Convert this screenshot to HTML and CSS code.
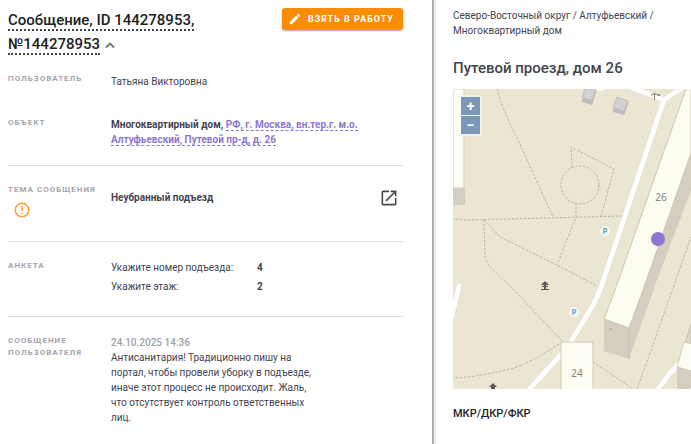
FILE: index.html
```html
<!DOCTYPE html>
<html lang="ru">
<head>
    <meta charset="UTF-8">
    <meta name="viewport" content="width=device-width, initial-scale=1.0">
    <title>Сообщение</title>
    <link rel="stylesheet" href="styles.css">
</head>
<body>
    <div class="page">
        <main class="message">
            <header class="head">
                <h1 class="title"><span class="title-text">Сообщение, ID 144278953, №144278953</span>
                    <button class="icon-btn toggle" type="button" aria-label="Свернуть">
                        <svg width="12" height="8" viewBox="0 0 12 8"><path d="M2 6.500l4-4 4 4" fill="none" stroke="#757575" stroke-width="1.800"/></svg>
                    </button>
                </h1>
                <button class="take" type="button">
                    <svg width="14" height="14" viewBox="0 0 24 24"><path fill="#fff" d="M3 17.250V21h3.750L17.810 9.940l-3.750-3.750L3 17.250zM20.710 7.040a1 1 0 0 0 0-1.410l-2.340-2.340a1 1 0 0 0-1.410 0l-1.830 1.830 3.750 3.750 1.830-1.830z"/></svg>
                    Взять в работу
                </button>
            </header>

            <section class="row row-user">
                <h2 class="label">Пользователь</h2>
                <div class="value">Татьяна Викторовна</div>
            </section>

            <section class="row row-object">
                <h2 class="label">Объект</h2>
                <div class="value strong">Многоквартирный дом, <a class="link" href="#">РФ, г. Москва, вн.тер.г. м.о. Алтуфьевский, Путевой пр-д, д. 26</a></div>
            </section>

            <section class="row row-theme line">
                <div class="label-box">
                    <h2 class="label">Тема сообщения</h2>
                    <svg class="warn" width="16" height="16" viewBox="0 0 16 16"><circle cx="8" cy="8" r="6.800" fill="none" stroke="#ff9f33" stroke-width="1.500"/><path d="M8 4v5M8 10.500v1.500" stroke="#ff9f33" stroke-width="1.500"/></svg>
                </div>
                <div class="value strong">Неубранный подъезд</div>
                <button class="icon-btn open" type="button" aria-label="Открыть">
                    <svg width="20" height="20" viewBox="0 0 24 24"><path fill="#4a4a55" d="M19 19H5V5h7V3H5a2 2 0 0 0-2 2v14a2 2 0 0 0 2 2h14a2 2 0 0 0 2-2v-7h-2v7zM14 3v2h3.590l-9.830 9.830 1.410 1.410L19 6.410V10h2V3h-7z"/></svg>
                </button>
            </section>

            <section class="row row-form line">
                <h2 class="label">Анкета</h2>
                <dl class="answers">
                    <dt>Укажите номер подъезда:</dt><dd>4</dd>
                    <dt>Укажите этаж:</dt><dd>2</dd>
                </dl>
            </section>

            <section class="row row-text line">
                <h2 class="label">Сообщение пользователя</h2>
                <div class="value comment">
                    <time class="date">24.10.2025 14:36</time>
                    <p>Антисанитария! Традиционно пишу на портал, чтобы провели уборку в подъезде, иначе этот процесс не происходит. Жаль, что отсутствует контроль ответственных лиц.</p>
                </div>
            </section>
        </main>

        <aside class="side">
            <p class="crumbs">Северо-Восточный округ / Алтуфьевский / Многоквартирный дом</p>
            <h2 class="address">Путевой проезд, дом 26</h2>
            <div class="map">
                <svg class="map-view" viewBox="0 0 238 300" preserveAspectRatio="xMinYMin slice">
                    <rect width="238" height="300" fill="#ebe6d2"/>
                    <!-- paths -->
                    <g fill="none" stroke="#b9b5a0" stroke-width="1" stroke-dasharray="2.500 1.500">
                        <path d="M44 0Q50 22 65 51L100 128"/>
                        <path d="M-1 130L15 131 169 127"/>
                        <path d="M31 131L32 168 36 177 59 199 110 253"/>
                        <path d="M31 131L47 148 104 176 144 197"/>
                        <path d="M123 114V128L104 176"/>
                        <circle cx="127" cy="96" r="19"/>
                        <path d="M119 79L118 58 161 80 148 127"/>
                        <path d="M-1 289Q20 289 57 280Q75 276 109 253"/>
                        <path d="M140 273L180 300"/>
                        <path d="M184 300Q203 248 220 199L238 148"/>
                    </g>
                    <!-- roads -->
                    <g fill="none" stroke-linejoin="round" stroke-linecap="round">
                        <path d="M174-3L211 11 236-6M211 11L147 201Q144 209 139 218L114 259 73 304M6 197L-2 230M202 304L217 284 227 274" stroke="#dedac9" stroke-width="6"/>
                        <path d="M174-3L211 11 236-6M211 11L147 201Q144 209 139 218L114 259 73 304M6 197L-2 230M202 304L217 284 227 274" stroke="#fff" stroke-width="5"/>
                    </g>
                    <ellipse cx="148" cy="0" rx="4" ry="2" fill="#fbfbef"/>
                    <!-- buildings -->
                    <path d="M0 99H12V116H0z" fill="#d5cdc0"/>
                    <path d="M0 0H11V99H0z" fill="#fcfcf2" stroke="#d3cebd" stroke-width="1"/>
                    <path d="M151 230V262L176 270 204 191 238 101V64z" fill="#d5cdc0"/>
                    <path d="M234-3L162 201 151 230 176 239 190 201 238 64V-3z" fill="#fcfcf0" stroke="#cbc5b2" stroke-width="1"/>
                    <path d="M176 239V270" stroke="#c6beb2"/>
                    <circle cx="158" cy="240" r="1" fill="#aaa398"/>
                    <path d="M238 236L232 254H238z" fill="#ded8cc" stroke="#c8c2b5"/>
                    <path d="M224 278H238V300H224z" fill="#d5cdc0"/>
                    <path d="M231 253L224 278 239 282V255z" fill="#fcfcf2" stroke="#d3cebd" stroke-width="1"/>
                    <path d="M108 253H140V301H108z" fill="#fcfcf2" stroke="#d0cab8" stroke-width="1"/>
                    <path d="M129 9L139 11V16L129 13zM160 19L171 22V26L160 23z" fill="#bdbdbb"/>
                    <path d="M132-1L143 0 139 11 129 9z" fill="#d2d2d1" stroke="#bebeba"/>
                    <path d="M164 8L175 12 171 22 160 19z" fill="#d2d2d1" stroke="#bebeba"/>
                    <path d="M139 11V16L143 3V0zM171 22V26L175 15V12z" fill="#b7b7b5"/>
                    <!-- marks -->
                    <circle cx="152" cy="142" r="5" fill="#f7f6ef"/>
                    <circle cx="121" cy="223" r="5" fill="#f7f6ef"/>
                    <g class="parking"><text x="152" y="145">P</text><text x="121" y="226">P</text></g>
                    <path d="M92 192L96 196H88zM89 197h6v1h-6zM88 200h8v1h-8zM91 196h2v5h-2zM40 294l4 4H36zM38 298h4v2h-4z" fill="#5d5959"/>
                    <path d="M201.500 4v7M198 6.500l2-1.500h3l2 1.500M205 5l1 2 1-2" fill="none" stroke="#8b7a70"/>
                    <g class="house"><text x="208" y="112">26</text><text x="124" y="288">24</text></g>
                    <circle cx="205" cy="150" r="7" fill="#8c78d0"/>
                </svg>
                <div class="zoom">
                    <button type="button" aria-label="Приблизить">+</button>
                    <button type="button" aria-label="Отдалить">−</button>
                </div>
            </div>
            <h3 class="sub">МКР/ДКР/ФКР</h3>
        </aside>
    </div>
</body>
</html>
```
FILE: styles.css
```css
* {
    box-sizing: border-box;
}
body {
    margin: 0;
    background: #fff;
    color: #44444f;
    font: 10px/15px Roboto, "Noto Sans", sans-serif;
}
h1, h2, h3, p, dl, dd {
    margin: 0;
}
button {
    border: 0;
    font-family: inherit;
    cursor: pointer;
}
.page {
    display: grid;
    grid-template-columns: 434fr 257fr;
    min-height: 100vh;
}
.message {
    padding: 8px 29px 8px 8px;
    border-right: 2px solid #aeaeb2;
}
.head {
    display: flex;
    justify-content: space-between;
    align-items: flex-start;
}
.title {
    width: 210px;
    font-size: 15px;
    line-height: 24px;
    font-weight: 500;
    color: #212121;
}
.title-text {
    border-bottom: 2px dotted #444;
}
.icon-btn {
    padding: 0;
    background: none;
}
.icon-btn svg, .take svg, .warn {
    display: block;
}
.toggle {
    display: inline-block;
    vertical-align: middle;
}
.take {
    display: flex;
    align-items: center;
    gap: 6px;
    height: 22px;
    padding: 0 9px 0 6px;
    border-radius: 3px;
    background: #fb8c00;
    box-shadow: 0 1px 2px rgba(0, 0, 0, .35);
    color: #fff;
    font-size: 9px;
    font-weight: 700;
    letter-spacing: 1px;
    text-transform: uppercase;
    white-space: nowrap;
}
.row {
    display: grid;
    grid-template-columns: 91px 1fr auto;
    column-gap: 12px;
}
.line {
    border-top: 1px solid #dedede;
}
.label {
    color: #a4a4aa;
    font-size: 8px;
    line-height: 12px;
    font-weight: 700;
    letter-spacing: 1px;
    text-transform: uppercase;
}
.strong {
    font-weight: 700;
}
.link {
    color: #8c78d0;
    text-decoration: none;
    border-bottom: 1px dashed #8c78d0;
}
.row-user {
    padding-top: 17px;
}
.row-object {
    padding: 28px 0 18px;
}
.row-user .value {
    padding-top: 1px;
}
.row-theme {
    padding: 18px 0 17px;
}
.row-theme .label {
    white-space: nowrap;
}
.row-theme .value {
    padding-top: 6px;
}
.warn {
    margin: 6px;
}
.open {
    align-self: start;
    margin: 4px;
}
.row-form {
    padding: 18px 0 22px;
}
.answers {
    display: grid;
    grid-template-columns: 134px 1fr;
    column-gap: 12px;
    row-gap: 4px;
}
.answers dd {
    font-weight: 700;
}
.row-text {
    padding-top: 18px;
}
.comment {
    max-width: 210px;
}
.date {
    color: #a0a0a8;
    font-weight: 500;
}
.side {
    min-width: 0;
    margin-left: 1px;
    padding: 8px 0 8px 17px;
    border-left: 1px solid #dedede;
}
.address {
    margin: 20px 0 11px;
    font-size: 15px;
    line-height: 20px;
    font-weight: 500;
}
.map {
    position: relative;
    height: 300px;
    overflow: hidden;
    border-radius: 2px;
}
.map-view {
    display: block;
    width: 100%;
    height: 100%;
}
.house {
    fill: #88867c;
    font: 10px "Noto Sans", sans-serif;
    text-anchor: middle;
}
.parking {
    fill: #5aaadc;
    font: 700 8px "Noto Sans", sans-serif;
    text-anchor: middle;
}
.zoom {
    position: absolute;
    top: 6px;
    left: 6px;
    padding: 2px;
    border-radius: 3px;
    background: rgba(255, 255, 255, .4);
}
.zoom button {
    display: block;
    width: 19px;
    height: 18px;
    padding: 0;
    background: #7b98b8;
    color: #fff;
    font-size: 14px;
    line-height: 16px;
    font-weight: 700;
}
.zoom button + button {
    margin-top: 1px;
}
.sub {
    margin-top: 17px;
    color: #212128;
    font-size: 11px;
    line-height: 16px;
    font-weight: 500;
}
```
